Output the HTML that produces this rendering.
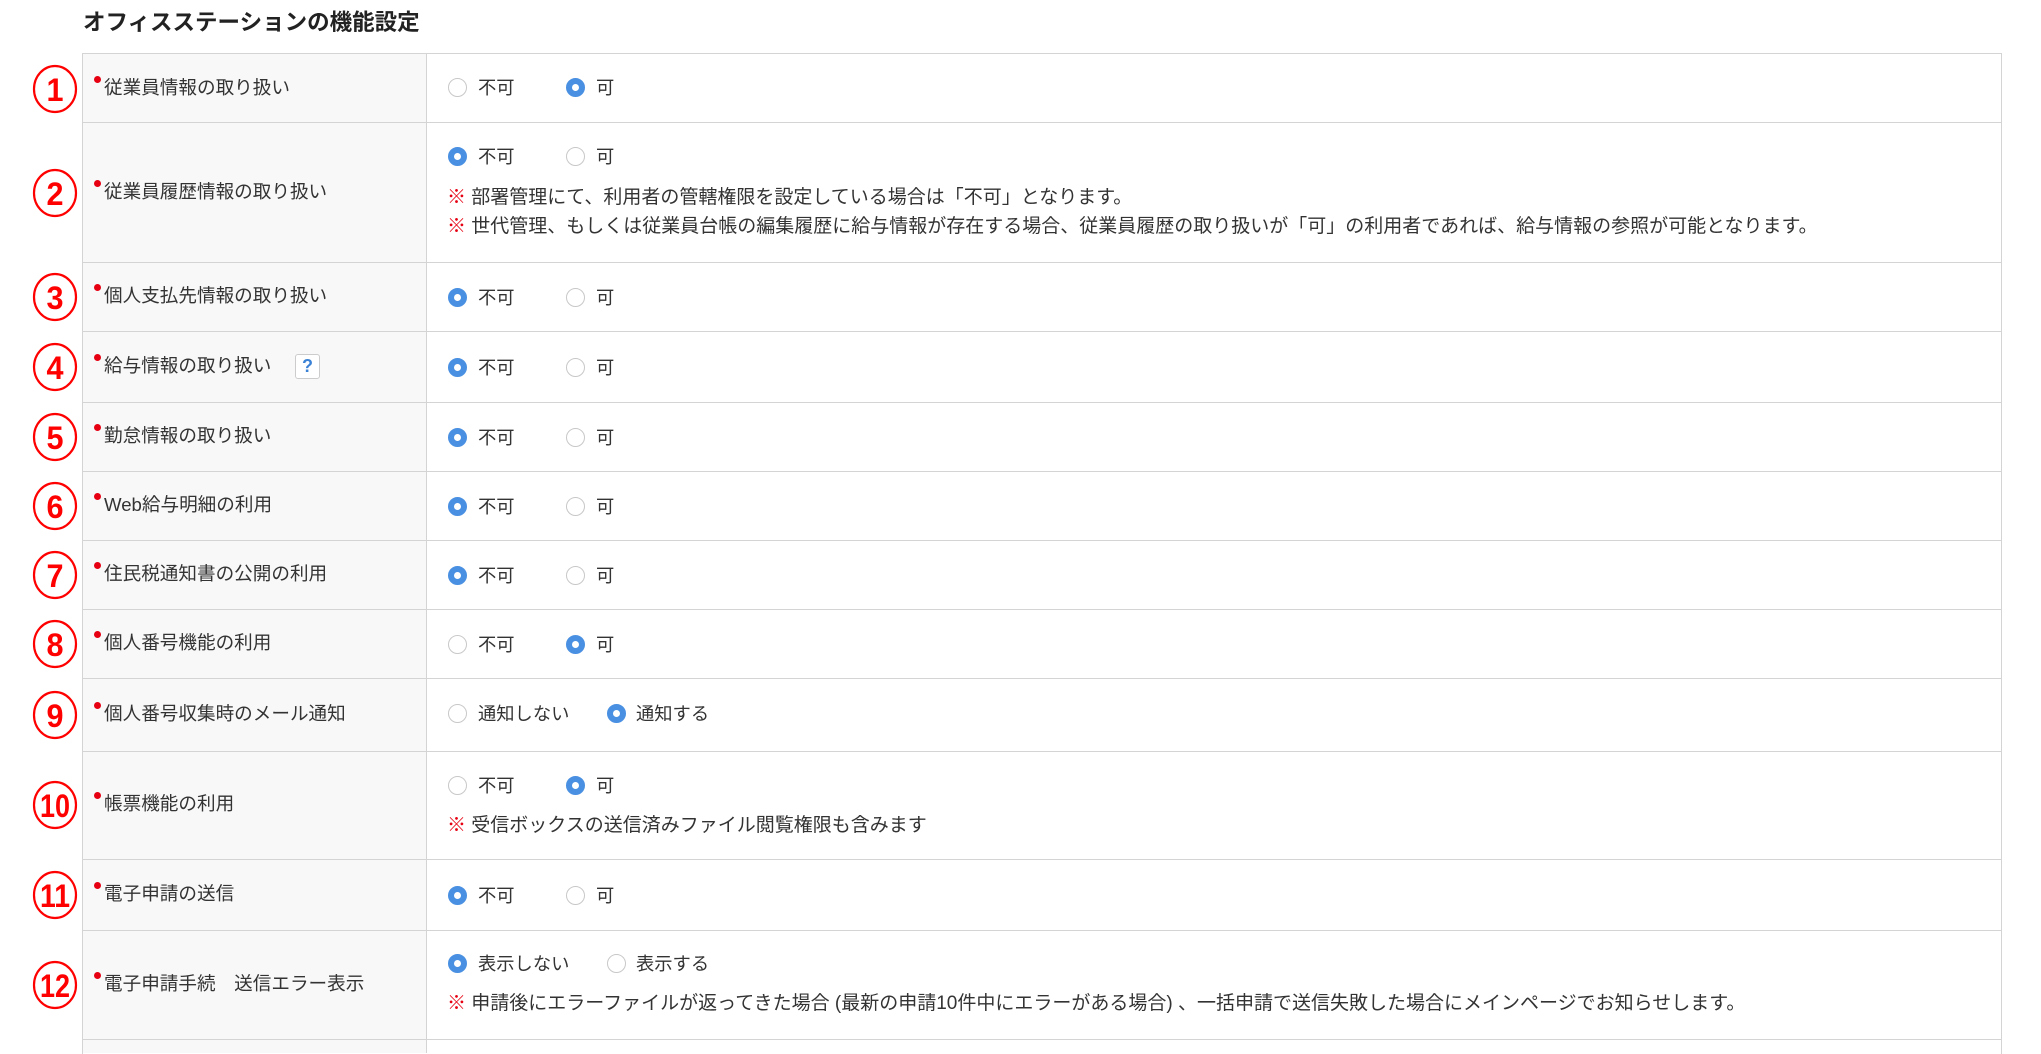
<!DOCTYPE html>
<html><head><meta charset="utf-8"><style>
body{margin:0;width:2041px;height:1049px;background:#fff;position:relative;overflow:hidden;font-family:"Liberation Sans","Noto Sans CJK JP",sans-serif;color:#333;}
.t{position:absolute;white-space:nowrap;line-height:1;}
.title{left:83px;top:12px;font-size:22.5px;font-weight:bold;color:#222;}
.tbl{position:absolute;left:82px;top:53px;width:1918px;height:1000px;border:1.5px solid #d4d4d4;border-bottom:none;}
.lab{position:absolute;left:82px;top:53px;width:344px;height:1000px;background:#f8f8f8;border-right:1.5px solid #d4d4d4;}
.hl{position:absolute;left:82px;width:1920px;height:0;border-top:1.5px solid #d4d4d4;}
.lbl{font-size:18.6px;left:104px;}
.dot{position:absolute;width:7px;height:7px;border-radius:50%;background:#e60012;}
.r{position:absolute;width:19px;height:19px;border-radius:50%;border:1.5px solid #c8c8c8;background:#fff;box-sizing:border-box;}
.r.on{border:6px solid #4a90e2;background:#fff;}
.rt{font-size:18.3px;}
.note{font-size:19px;}
.note b{color:#e60012;font-weight:bold;}
.q{position:absolute;left:295px;width:25px;height:25px;border:1.5px solid #ccc;border-radius:3px;box-sizing:border-box;color:#3b82d6;font-weight:bold;font-size:18px;text-align:center;line-height:23px;background:#fff;}
svg{position:absolute;left:0;top:0;}
</style></head><body>
<div class="t title">オフィスステーションの機能設定</div>
<div class="lab"></div>
<div class="tbl"></div>
<div class="hl" style="top:122px"></div>
<div class="hl" style="top:262px"></div>
<div class="hl" style="top:331px"></div>
<div class="hl" style="top:402px"></div>
<div class="hl" style="top:471px"></div>
<div class="hl" style="top:540px"></div>
<div class="hl" style="top:609px"></div>
<div class="hl" style="top:678px"></div>
<div class="hl" style="top:751px"></div>
<div class="hl" style="top:859px"></div>
<div class="hl" style="top:930px"></div>
<div class="hl" style="top:1039px"></div>

<svg width="120" height="1049" font-family="Liberation Sans, sans-serif" font-weight="bold" fill="#f00">
<g fill="none" stroke="#f00" stroke-width="2.2">
<ellipse cx="55" cy="89" rx="21" ry="23"/>
<ellipse cx="55" cy="193" rx="21" ry="23"/>
<ellipse cx="55" cy="297" rx="21" ry="23"/>
<ellipse cx="55" cy="367" rx="21" ry="23"/>
<ellipse cx="55" cy="437" rx="21" ry="23"/>
<ellipse cx="55" cy="506" rx="21" ry="23"/>
<ellipse cx="55" cy="575" rx="21" ry="23"/>
<ellipse cx="55" cy="644" rx="21" ry="23"/>
<ellipse cx="55" cy="715" rx="21" ry="23"/>
<ellipse cx="55" cy="805" rx="21" ry="23"/>
<ellipse cx="55" cy="895" rx="21" ry="23"/>
<ellipse cx="55" cy="985" rx="21" ry="23"/>
</g>
<g font-size="32" text-anchor="middle">
<text x="55" y="101" textLength="17" lengthAdjust="spacingAndGlyphs">1</text><text x="55" y="205" textLength="17" lengthAdjust="spacingAndGlyphs">2</text><text x="55" y="309" textLength="17" lengthAdjust="spacingAndGlyphs">3</text>
<text x="55" y="379" textLength="17" lengthAdjust="spacingAndGlyphs">4</text><text x="55" y="449" textLength="17" lengthAdjust="spacingAndGlyphs">5</text><text x="55" y="518" textLength="17" lengthAdjust="spacingAndGlyphs">6</text>
<text x="55" y="587" textLength="17" lengthAdjust="spacingAndGlyphs">7</text><text x="55" y="656" textLength="17" lengthAdjust="spacingAndGlyphs">8</text><text x="55" y="727" textLength="17" lengthAdjust="spacingAndGlyphs">9</text>
<text x="55" y="817" textLength="30" lengthAdjust="spacingAndGlyphs">10</text>
<text x="55" y="907" textLength="30" lengthAdjust="spacingAndGlyphs">11</text>
<text x="55" y="997" textLength="30" lengthAdjust="spacingAndGlyphs">12</text>
</g></svg>

<div class="dot" style="left:94px;top:76px"></div><div class="t lbl" style="top:79px">従業員情報の取り扱い</div>
<div class="dot" style="left:94px;top:180px"></div><div class="t lbl" style="top:183px">従業員履歴情報の取り扱い</div>
<div class="dot" style="left:94px;top:284px"></div><div class="t lbl" style="top:287px">個人支払先情報の取り扱い</div>
<div class="dot" style="left:94px;top:354px"></div><div class="t lbl" style="top:357px">給与情報の取り扱い</div><div class="q" style="top:354px">?</div>
<div class="dot" style="left:94px;top:424px"></div><div class="t lbl" style="top:427px">勤怠情報の取り扱い</div>
<div class="dot" style="left:94px;top:493px"></div><div class="t lbl" style="top:496px">Web給与明細の利用</div>
<div class="dot" style="left:94px;top:562px"></div><div class="t lbl" style="top:565px">住民税通知書の公開の利用</div>
<div class="dot" style="left:94px;top:631px"></div><div class="t lbl" style="top:634px">個人番号機能の利用</div>
<div class="dot" style="left:94px;top:702px"></div><div class="t lbl" style="top:705px">個人番号収集時のメール通知</div>
<div class="dot" style="left:94px;top:792px"></div><div class="t lbl" style="top:795px">帳票機能の利用</div>
<div class="dot" style="left:94px;top:882px"></div><div class="t lbl" style="top:885px">電子申請の送信</div>
<div class="dot" style="left:94px;top:972px"></div><div class="t lbl" style="top:975px">電子申請手続　送信エラー表示</div>

<div class="r" style="left:448px;top:78px"></div><div class="t rt" style="left:478px;top:79px">不可</div>
<div class="r on" style="left:566px;top:78px"></div><div class="t rt" style="left:596px;top:79px">可</div>
<div class="r on" style="left:448px;top:147px"></div><div class="t rt" style="left:478px;top:148px">不可</div>
<div class="r" style="left:566px;top:147px"></div><div class="t rt" style="left:596px;top:148px">可</div>
<div class="t note" style="left:447px;top:188px"><b>※</b> 部署管理にて、利用者の管轄権限を設定している場合は「不可」となります。</div>
<div class="t note" style="left:447px;top:217px"><b>※</b> 世代管理、もしくは従業員台帳の編集履歴に給与情報が存在する場合、従業員履歴の取り扱いが「可」の利用者であれば、給与情報の参照が可能となります。</div>
<div class="r on" style="left:448px;top:288px"></div><div class="t rt" style="left:478px;top:289px">不可</div>
<div class="r" style="left:566px;top:288px"></div><div class="t rt" style="left:596px;top:289px">可</div>
<div class="r on" style="left:448px;top:358px"></div><div class="t rt" style="left:478px;top:359px">不可</div>
<div class="r" style="left:566px;top:358px"></div><div class="t rt" style="left:596px;top:359px">可</div>
<div class="r on" style="left:448px;top:428px"></div><div class="t rt" style="left:478px;top:429px">不可</div>
<div class="r" style="left:566px;top:428px"></div><div class="t rt" style="left:596px;top:429px">可</div>
<div class="r on" style="left:448px;top:497px"></div><div class="t rt" style="left:478px;top:498px">不可</div>
<div class="r" style="left:566px;top:497px"></div><div class="t rt" style="left:596px;top:498px">可</div>
<div class="r on" style="left:448px;top:566px"></div><div class="t rt" style="left:478px;top:567px">不可</div>
<div class="r" style="left:566px;top:566px"></div><div class="t rt" style="left:596px;top:567px">可</div>
<div class="r" style="left:448px;top:635px"></div><div class="t rt" style="left:478px;top:636px">不可</div>
<div class="r on" style="left:566px;top:635px"></div><div class="t rt" style="left:596px;top:636px">可</div>
<div class="r" style="left:448px;top:704px"></div><div class="t rt" style="left:478px;top:705px">通知しない</div>
<div class="r on" style="left:607px;top:704px"></div><div class="t rt" style="left:636px;top:705px">通知する</div>
<div class="r" style="left:448px;top:776px"></div><div class="t rt" style="left:478px;top:777px">不可</div>
<div class="r on" style="left:566px;top:776px"></div><div class="t rt" style="left:596px;top:777px">可</div>
<div class="t note" style="left:447px;top:816px"><b>※</b> 受信ボックスの送信済みファイル閲覧権限も含みます</div>
<div class="r on" style="left:448px;top:886px"></div><div class="t rt" style="left:478px;top:887px">不可</div>
<div class="r" style="left:566px;top:886px"></div><div class="t rt" style="left:596px;top:887px">可</div>
<div class="r on" style="left:448px;top:954px"></div><div class="t rt" style="left:478px;top:955px">表示しない</div>
<div class="r" style="left:607px;top:954px"></div><div class="t rt" style="left:636px;top:955px">表示する</div>
<div class="t note" style="left:447px;top:994px"><b>※</b> 申請後にエラーファイルが返ってきた場合 (最新の申請10件中にエラーがある場合) 、一括申請で送信失敗した場合にメインページでお知らせします。</div>
</body></html>
